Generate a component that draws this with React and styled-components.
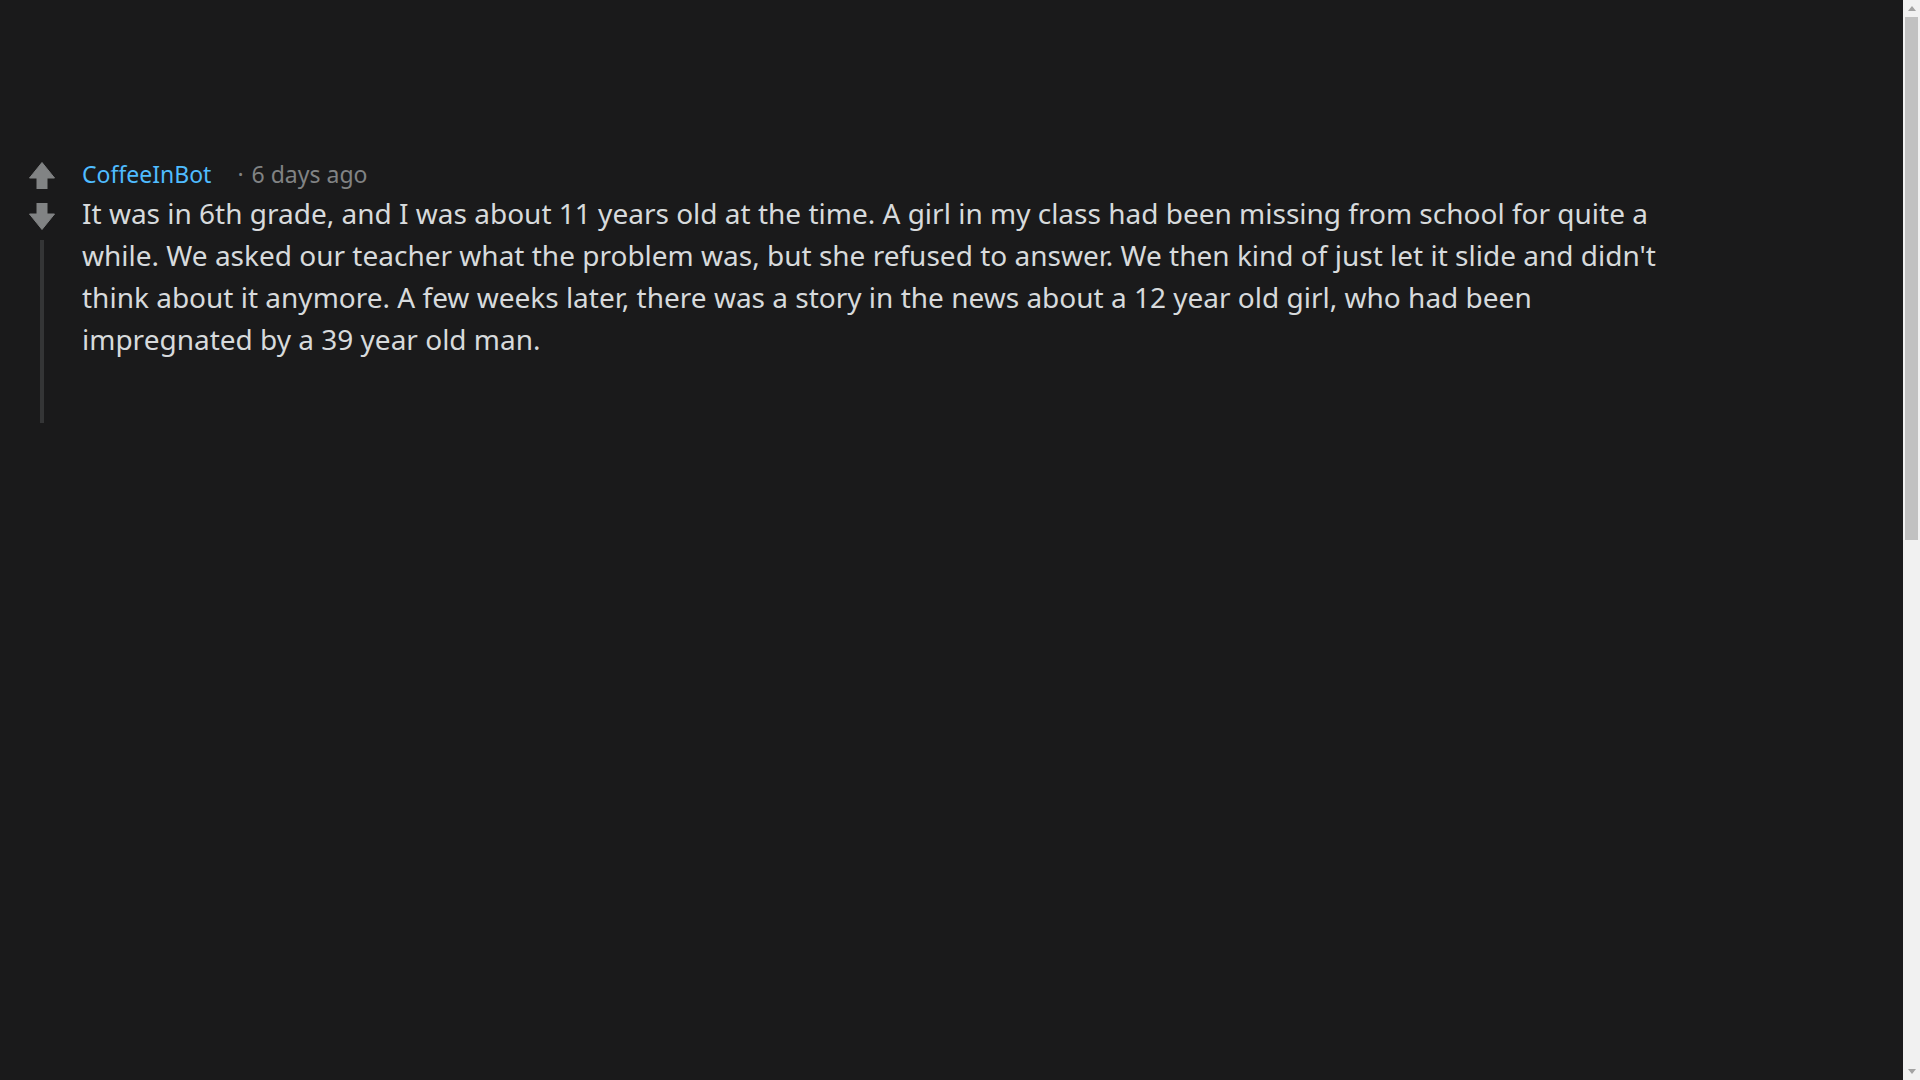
import React from 'react';
import styled, { createGlobalStyle } from 'styled-components';

const GlobalStyle = createGlobalStyle`
  html, body {
    margin: 0;
    padding: 0;
    background-color: #1a1a1b;
    overflow: hidden;
  }
  * {
    box-sizing: border-box;
  }
`;

const Page = styled.div`
  display: flex;
  width: 100%;
  height: 100vh;
  background-color: #1a1a1b;
  font-family: 'Noto Sans', 'Open Sans', sans-serif;
`;

const Main = styled.main`
  flex: 1;
  padding-top: 158px;
`;

const Comment = styled.div`
  display: flex;
  gap: 14px;
  padding-left: 16px;
`;

const VoteColumn = styled.div`
  width: 52px;
  display: flex;
  flex-direction: column;
  align-items: center;
  padding-top: 4px;
`;

const VoteButton = styled.button`
  background: none;
  border: none;
  padding: 0;
  width: 26px;
  height: 27px;
  margin-bottom: ${props => props.$gap || 0}px;
  cursor: pointer;
  color: #818384;
  display: flex;

  svg {
    display: block;
  }
`;

const ThreadLine = styled.div`
  flex: 1;
  width: 4px;
  background-color: #343536;
`;

const Content = styled.div`
  width: 1600px;
  padding-bottom: 63px;
`;

const Header = styled.div`
  display: flex;
  align-items: baseline;
  font-size: 23px;
  line-height: 32px;
  margin-bottom: 2px;
`;

const Author = styled.a`
  color: #4fbcff;
  text-decoration: none;
`;

const Meta = styled.span`
  color: #818384;
  margin-left: 26px;
`;

const Dot = styled.span`
  margin-right: 8px;
`;

const Body = styled.p`
  margin: 0;
  color: #d7dadc;
  font-size: 28px;
  line-height: 42px;
`;

const ScrollTrack = styled.div`
  width: 17px;
  height: 100vh;
  background-color: #f1f1f1;
  display: flex;
  flex-direction: column;
  align-items: center;
`;

const ScrollArrow = styled.div`
  width: 17px;
  height: 17px;
  display: flex;
  align-items: center;
  justify-content: center;
`;

const ScrollThumb = styled.div`
  width: 13px;
  height: 523px;
  background-color: #c1c1c1;
`;

const ScrollSpacer = styled.div`
  flex: 1;
`;

const Arrow = ({ down }) => (
  <svg width="26" height="27" viewBox="0 0 26 27" style={down ? { transform: 'rotate(180deg)' } : undefined}>
    <path d="M13 0.5 L25.5 16 L18 16 L18 27 L8 27 L8 16 L0.5 16 Z" fill="currentColor" strokeLinejoin="round" stroke="currentColor" strokeWidth="1" />
  </svg>
);

const Tri = ({ down }) => (
  <svg width="8" height="5" viewBox="0 0 8 5">
    <path d={down ? 'M0 0 L8 0 L4 5 Z' : 'M4 0 L8 5 L0 5 Z'} fill="#a3a3a3" />
  </svg>
);

export default function App() {
  return (
    <>
      <GlobalStyle />
      <Page>
        <Main>
          <Comment>
            <VoteColumn>
              <VoteButton $gap={14} aria-label="upvote"><Arrow /></VoteButton>
              <VoteButton $gap={10} aria-label="downvote"><Arrow down /></VoteButton>
              <ThreadLine />
            </VoteColumn>
            <Content>
              <Header>
                <Author href="#">CoffeeInBot</Author>
                <Meta><Dot>·</Dot>6 days ago</Meta>
              </Header>
              <Body>
                It was in 6th grade, and I was about 11 years old at the time. A girl in my class had been missing from school for quite a while. We asked our teacher what the problem was, but she refused to answer. We then kind of just let it slide and didn't think about it anymore. A few weeks later, there was a story in the news about a 12 year old girl, who had been impregnated by a 39 year old man.
              </Body>
            </Content>
          </Comment>
        </Main>
        <ScrollTrack>
          <ScrollArrow><Tri /></ScrollArrow>
          <ScrollThumb />
          <ScrollSpacer />
          <ScrollArrow><Tri down /></ScrollArrow>
        </ScrollTrack>
      </Page>
    </>
  );
}
